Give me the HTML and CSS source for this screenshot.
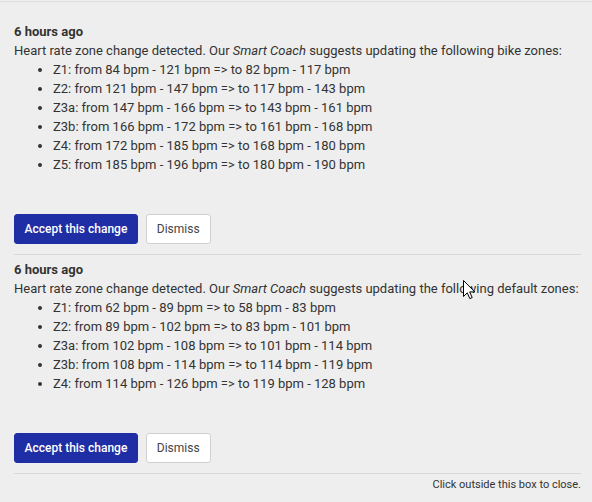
FILE: index.html
```html
<!DOCTYPE html>
<html>
<head>
<meta charset="utf-8">
<link rel="stylesheet" href="styles.css">
</head>
<body>
<div class="panel">
  <div class="item">
    <div class="time">6 hours ago</div>
    <div class="msg">Heart rate zone change detected. Our <em>Smart Coach</em> suggests updating the following bike zones:</div>
    <ul class="zones">
      <li>Z1: from 84 bpm - 121 bpm =&gt; to 82 bpm - 117 bpm</li>
      <li>Z2: from 121 bpm - 147 bpm =&gt; to 117 bpm - 143 bpm</li>
      <li>Z3a: from 147 bpm - 166 bpm =&gt; to 143 bpm - 161 bpm</li>
      <li>Z3b: from 166 bpm - 172 bpm =&gt; to 161 bpm - 168 bpm</li>
      <li>Z4: from 172 bpm - 185 bpm =&gt; to 168 bpm - 180 bpm</li>
      <li>Z5: from 185 bpm - 196 bpm =&gt; to 180 bpm - 190 bpm</li>
    </ul>
    <div class="actions">
      <button class="btn btn-primary">Accept this change</button>
      <button class="btn btn-default">Dismiss</button>
    </div>
  </div>
  <div class="item">
    <div class="time">6 hours ago</div>
    <div class="msg">Heart rate zone change detected. Our <em>Smart Coach</em> suggests updating the following default zones:</div>
    <ul class="zones">
      <li>Z1: from 62 bpm - 89 bpm =&gt; to 58 bpm - 83 bpm</li>
      <li>Z2: from 89 bpm - 102 bpm =&gt; to 83 bpm - 101 bpm</li>
      <li>Z3a: from 102 bpm - 108 bpm =&gt; to 101 bpm - 114 bpm</li>
      <li>Z3b: from 108 bpm - 114 bpm =&gt; to 114 bpm - 119 bpm</li>
      <li>Z4: from 114 bpm - 126 bpm =&gt; to 119 bpm - 128 bpm</li>
    </ul>
    <div class="actions">
      <button class="btn btn-primary">Accept this change</button>
      <button class="btn btn-default">Dismiss</button>
    </div>
  </div>
  <div class="footer">Click outside this box to close.</div>
  <svg class="cursor" width="13" height="20" viewBox="0 0 13 20">
    <path d="M0.5 0.5 L0.5 16.5 L4.3 12.8 L6.8 18.6 L9.2 17.6 L6.7 11.9 L11.8 11.9 Z" fill="#ffffff" stroke="#000000" stroke-width="1" stroke-linejoin="round"/>
  </svg>
</div>
</body>
</html>
```
FILE: styles.css
```css
html, body {
  margin: 0;
  padding: 0;
  background: #eeeeee;
}
body {
  font-family: Roboto, "Liberation Sans", Arial, sans-serif;
  font-size: 13px;
  line-height: 19px;
  color: #333333;
}
.panel {
  position: relative;
  margin-top: 1px;
  border-top: 1px solid #dedede;
  padding: 20px 11px 0 14px;
}
.item {
  border-bottom: 1px solid #d9d9d9;
  padding-bottom: 10px;
}
.item + .item {
  padding-top: 5px;
}
.time {
  font-weight: 700;
}
.zones {
  margin: 0 0 40px 0;
  padding-left: 39px;
}
.actions {
  display: flex;
  gap: 8px;
}
.btn {
  font-family: Roboto, "Liberation Sans", Arial, sans-serif;
  font-size: 12px;
  height: 30px;
  border-radius: 3px;
  padding: 0 10px;
  margin: 0;
  cursor: pointer;
}
.btn-primary {
  background: #1f2ea4;
  border: 1px solid #1f2ea4;
  color: #ffffff;
  font-weight: 500;
  padding: 0 9.5px;
}
.btn-default {
  background: #ffffff;
  border: 1px solid #cfcfcf;
  color: #444444;
}
.footer {
  text-align: right;
  font-size: 11px;
  line-height: 17px;
  padding-top: 2px;
  color: #333333;
}
.cursor {
  position: absolute;
  left: 463px;
  top: 278px;
}
```
